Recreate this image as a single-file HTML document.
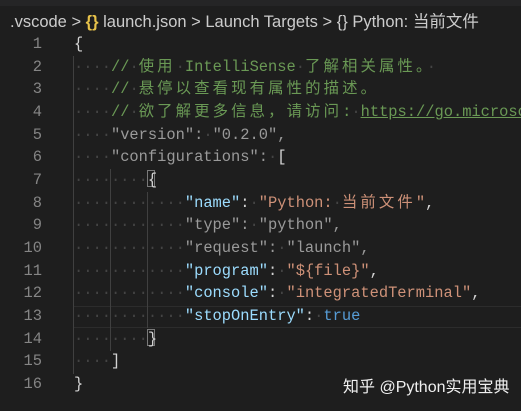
<!DOCTYPE html><html><head><meta charset="utf-8"><style>
body{margin:0;width:521px;height:411px;background:#1e1e1e;overflow:hidden;position:relative;font-family:"Liberation Mono","Noto Sans CJK SC",monospace}
.top{position:absolute;left:0;top:0;width:521px;height:6px;background:#252526}
.bc{position:absolute;left:10px;top:8px;font:16.5px "Liberation Sans","Noto Sans CJK SC",sans-serif;color:#ccc;letter-spacing:0px;white-space:nowrap}
.bc .y{color:#e8c34a;font-weight:bold}
.ln{position:absolute;left:0;width:42px;text-align:right;color:#858585;font-size:15.4px;line-height:22.67px}
.code{position:absolute;left:74px;top:33px;width:447px;overflow:hidden;font-size:15.4px;line-height:22.67px;color:#d4d4d4;white-space:pre}
.d{color:#444}.c{color:#6a9955}.k{color:#9cdcfe}.s{color:#ce9178}.g{color:#9a9a9a}.b{color:#569cd6}.u{text-decoration:underline}
.z{letter-spacing:3.1px}
.gd{position:absolute;width:1px;background:#404040}
.hl{position:absolute;left:74px;right:0;top:306px;height:20px;border-top:1px solid #2c2c2c;border-bottom:1px solid #2c2c2c}
.box{position:absolute;width:8px;height:17px;border:1px solid #7a7a7a;box-sizing:border-box}
.wm{position:absolute;left:343px;top:373px;font:16px "Liberation Sans","Noto Sans CJK SC",sans-serif;color:#f0f0f0}
</style></head><body>
<div class="top"></div>
<div class="bc">.vscode &gt; <span class="y">{}</span> launch.json &gt; Launch Targets &gt; {} Python: 当前文件</div>
<div class="ln" style="top:33px">1<br>2<br>3<br>4<br>5<br>6<br>7<br>8<br>9<br>10<br>11<br>12<br>13<br>14<br>15<br>16</div>
<div class="hl"></div>
<div class="gd" style="left:73px;top:56px;height:318px"></div>
<div class="gd" style="left:110px;top:169px;height:182px"></div>
<div class="gd" style="left:147px;top:192px;height:136px"></div>
<div class="box" style="left:147px;top:170px"></div>
<div class="box" style="left:147px;top:329px"></div>
<div class="code">{
<span class="d">····</span><span class="c">//<span class="d">·</span><span class="z">使用</span><span class="d">·</span>IntelliSense<span class="d">·</span><span class="z">了解相关属性。</span><span class="d">·</span></span>
<span class="d">····</span><span class="c">//<span class="d">·</span><span class="z">悬停以查看现有属性的描述。</span></span>
<span class="d">····</span><span class="c">//<span class="d">·</span><span class="z">欲了解更多信息，请访问</span>:<span class="d">·</span><span class="u">https://go.microsoft.com/fwlink</span></span>
<span class="d">····</span><span class="g">"version":<span class="d">·</span>"0.2.0",</span>
<span class="d">····</span><span class="g">"configurations":<span class="d">·</span></span>[
<span class="d">········</span>{
<span class="d">············</span><span class="k">"name"</span>:<span class="d">·</span><span class="s">"Python:<span class="d">·</span><span class="z">当前文件</span>"</span>,
<span class="d">············</span><span class="g">"type":<span class="d">·</span>"python",</span>
<span class="d">············</span><span class="g">"request":<span class="d">·</span>"launch",</span>
<span class="d">············</span><span class="k">"program"</span>:<span class="d">·</span><span class="s">"${file}"</span>,
<span class="d">············</span><span class="k">"console"</span>:<span class="d">·</span><span class="s">"integratedTerminal"</span>,
<span class="d">············</span><span class="k">"stopOnEntry"</span>:<span class="d">·</span><span class="b">true</span>
<span class="d">········</span>}
<span class="d">····</span>]
}</div>
<div class="wm">知乎 @Python实用宝典</div>
</body></html>
